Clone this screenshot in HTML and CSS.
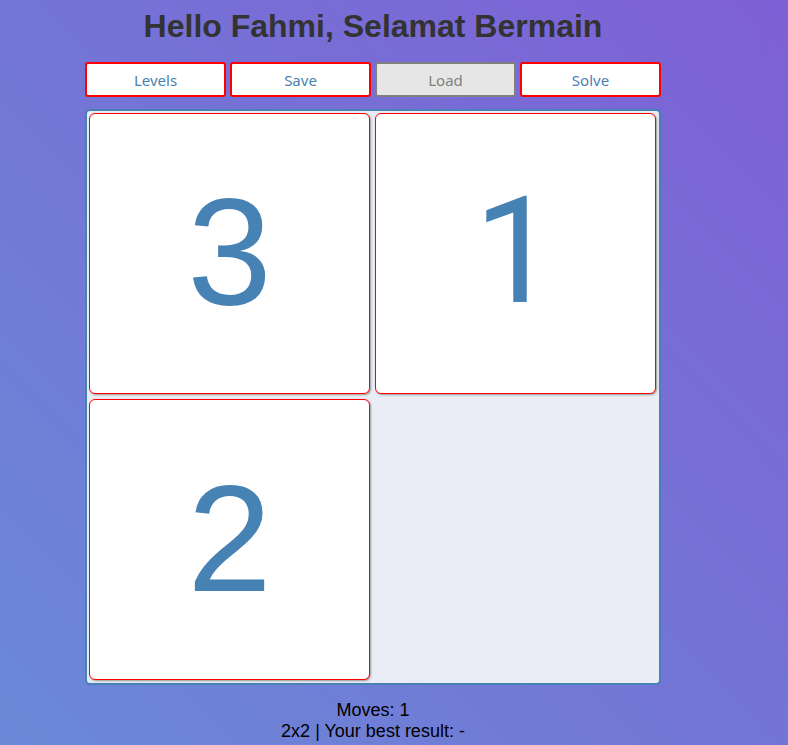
FILE: index.html
```html
<!DOCTYPE html>
<html lang="id">
<head>
<meta charset="utf-8">
<title>Puzzle</title>
<link rel="stylesheet" href="styles.css">
</head>
<body>
<main class="game">
  <h1 class="title">Hello Fahmi, Selamat Bermain</h1>
  <div class="toolbar">
    <button class="button" type="button">Levels</button>
    <button class="button" type="button">Save</button>
    <button class="button" type="button" disabled>Load</button>
    <button class="button" type="button">Solve</button>
  </div>
  <div class="board">
    <button class="tile" type="button">3</button>
    <button class="tile tile-plain" type="button">1</button>
    <button class="tile" type="button">2</button>
  </div>
  <div class="status">
    <div>Moves: 1</div>
    <div>2x2 | Your best result: -</div>
  </div>
</main>
</body>
</html>
```
FILE: styles.css
```css
* {
  box-sizing: border-box;
}

html {
  min-height: 100%;
  background: linear-gradient(45deg, #6a89d7, #7e60d5);
}

body {
  margin: 0;
  padding: 8px 42px 0 0;
  font-family: "Liberation Sans", Arial, sans-serif;
}

.game {
  width: 90%;
  max-width: 576px;
  margin: 0 auto;
}

.title {
  margin: 0 0 18px;
  color: #333;
  font-size: 32px;
  line-height: 36px;
  text-align: center;
}

.toolbar {
  display: grid;
  grid-template-columns: repeat(4, 1fr);
  gap: 4px;
  margin-bottom: 12px;
}

.button {
  height: 35px;
  padding: 0;
  border: 2px solid red;
  border-radius: 3px;
  background: #fff;
  color: steelblue;
  font-family: "Segoe UI", "Noto Sans", sans-serif;
  font-size: 15px;
}

.button:disabled {
  border-color: gray;
  background: #e6e6e6;
  color: gray;
}

.board {
  display: grid;
  grid-template-columns: repeat(2, 1fr);
  grid-template-rows: repeat(2, 1fr);
  gap: 5px;
  aspect-ratio: 1;
  padding: 2px 3px 3px 2px;
  border: 2px solid steelblue;
  border-radius: 5px;
  background: #eaedf5;
}

.tile {
  padding: 0 0 4px;
  border: 1px solid red;
  border-radius: 6px;
  background: #fff;
  box-shadow: 1px 1px 2px #999;
  color: steelblue;
  font-family: inherit;
  font-size: 152px;
  line-height: 1;
}

/* Digit one without a foot serif */
.tile-plain {
  font-family: Roboto, sans-serif;
  font-size: 148px;
}

.status {
  margin-top: 15px;
  font-size: 18px;
  line-height: 21px;
  text-align: center;
}
```
